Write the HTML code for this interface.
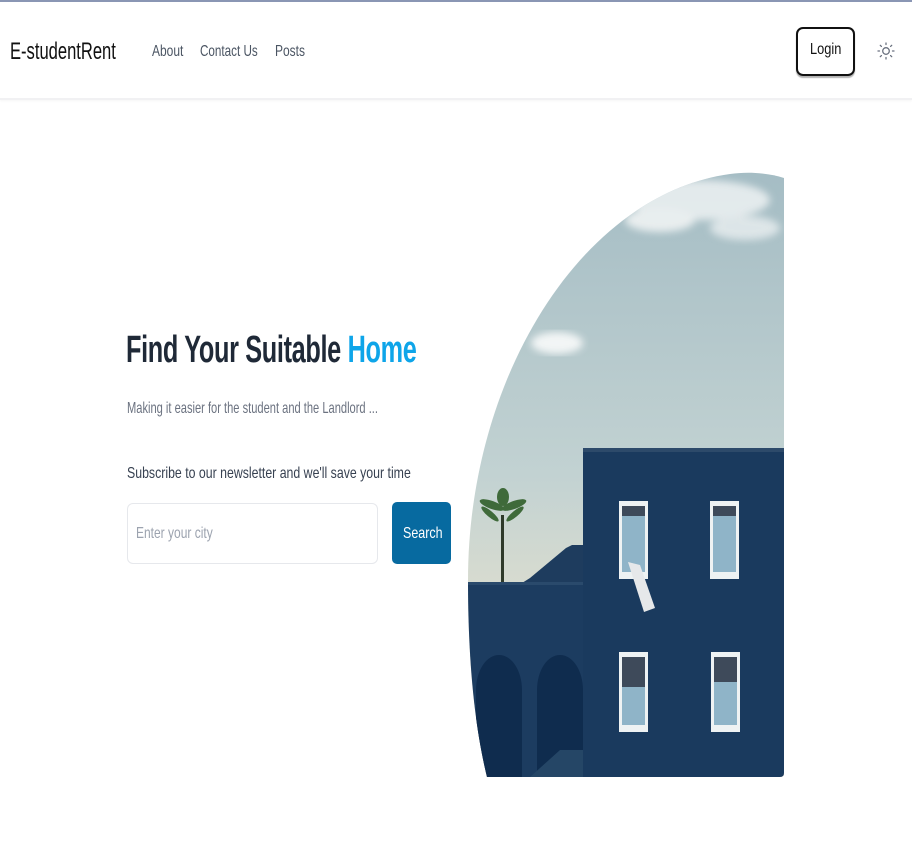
<!DOCTYPE html>
<html><head><meta charset="utf-8"><style>
*{margin:0;padding:0;box-sizing:border-box}
html,body{width:912px;height:854px;overflow:hidden;background:#fff;font-family:"Liberation Sans",sans-serif}
.topline{position:absolute;left:0;top:0;width:912px;height:2px;background:#8a96b4}
.hdr{position:absolute;left:0;top:2px;width:912px;height:98px;border-bottom:2px solid #f1f1f3;box-shadow:0 1px 2px rgba(0,0,0,.04)}
.t{position:absolute;white-space:nowrap;transform-origin:0 50%}
.login{position:absolute;left:796px;top:27px;width:59px;height:49px;border:2px solid #111;border-radius:7px;box-shadow:0 2px 1px rgba(0,0,0,.3)}
.inp{position:absolute;left:127px;top:503px;width:251px;height:61px;border:1px solid #e6e8ec;border-radius:6px}
.btn{position:absolute;left:392px;top:502px;width:59px;height:62px;background:#076aa0;border-radius:5px}
</style></head><body>
<div class="topline"></div>
<div class="hdr"></div>
<div class="t" style="left:10px;top:38px;font-size:24px;line-height:28px;color:#111;transform:scaleX(.69)">E-studentRent</div>
<div class="t" style="left:152px;top:42px;font-size:16px;line-height:20px;color:#4b5563;transform:scaleX(.75)">About</div>
<div class="t" style="left:200px;top:42px;font-size:16px;line-height:20px;color:#4b5563;transform:scaleX(.73)">Contact Us</div>
<div class="t" style="left:275px;top:42px;font-size:16px;line-height:20px;color:#4b5563;transform:scaleX(.75)">Posts</div>
<div class="login"></div>
<div class="t" style="left:810px;top:40px;font-size:16px;line-height:20px;color:#111;transform:scaleX(.8)">Login</div>
<svg style="position:absolute;left:876px;top:41px" width="20" height="20" viewBox="0 0 20 20" fill="none" stroke="#6b7280" stroke-width="1.3" stroke-linecap="round">
<circle cx="10" cy="10" r="3.3"/><path d="M10 2v1.5M10 16.5V18M2 10h1.5M16.5 10H18M4.3 4.3l1.1 1.1M14.6 14.6l1.1 1.1M4.3 15.7l1.1-1.1M14.6 5.4l1.1-1.1"/></svg>

<div class="t" style="left:126px;top:328px;font-size:38px;line-height:44px;font-weight:bold;color:#1f2937;transform:scaleX(.665);letter-spacing:-.5px">Find Your Suitable <span style="color:#0ea5e9">Home</span></div>
<div class="t" style="left:127px;top:399px;font-size:16px;line-height:20px;color:#6b7280;transform:scaleX(.695)">Making it easier for the student and the Landlord ...</div>
<div class="t" style="left:127px;top:464px;font-size:16px;line-height:20px;color:#374151;transform:scaleX(.77)">Subscribe to our newsletter and we'll save your time</div>
<div class="inp"></div>
<div class="t" style="left:136px;top:524px;font-size:16px;line-height:20px;color:#9ca3af;transform:scaleX(.75)">Enter your city</div>
<div class="btn"></div>
<div class="t" style="left:403px;top:524px;font-size:16px;line-height:20px;color:#fff;transform:scaleX(.78)">Search</div>

<svg style="position:absolute;left:0;top:0" width="912" height="854" viewBox="0 0 912 854">
<defs>
<clipPath id="c"><path d="M784 178 C765 172 745 172 730 174 C580 195 468 380 468 580 C468 680 478 740 487 777 L780 777 Q784 777 784 773 Z"/></clipPath>
<linearGradient id="sky" x1="0" y1="0" x2="0" y2="1">
<stop offset="0" stop-color="#a4bcc4"/><stop offset=".5" stop-color="#c2d2d2"/><stop offset=".75" stop-color="#e0dfcf"/><stop offset="1" stop-color="#f2dcb2"/></linearGradient>
<filter id="b"><feGaussianBlur stdDeviation="4"/></filter>
</defs>
<g clip-path="url(#c)">
<rect x="460" y="165" width="330" height="620" fill="url(#sky)"/>
<g filter="url(#b)" opacity=".85"><ellipse cx="700" cy="200" rx="70" ry="20" fill="#eef2f3"/>
<ellipse cx="660" cy="220" rx="35" ry="12" fill="#f4f6f6"/>
<ellipse cx="745" cy="228" rx="35" ry="12" fill="#e6ecee"/></g>
<ellipse cx="557" cy="343" rx="26" ry="11" fill="#f6f8f8" filter="url(#b)" opacity=".95"/>
<rect x="501" y="515" width="3" height="68" fill="#2f3a2a"/>
<g fill="#3f6a3a"><ellipse cx="492" cy="505" rx="13" ry="4" transform="rotate(20 492 505)"/><ellipse cx="514" cy="505" rx="13" ry="4" transform="rotate(-20 514 505)"/><ellipse cx="503" cy="497" rx="6" ry="9"/><ellipse cx="490" cy="514" rx="11" ry="3" transform="rotate(40 490 514)"/><ellipse cx="515" cy="514" rx="11" ry="3" transform="rotate(-40 515 514)"/></g>
<path d="M522 583 L530 578 L536 573 L542 568 L548 563 L554 558 L560 553 L566 548 L572 545 L584 545 L584 583Z" fill="#1e3c5e"/>
<rect x="460" y="582" width="125" height="200" fill="#1c3c60"/>
<rect x="460" y="582" width="125" height="3" fill="#2a4a6c"/>
<path d="M476 777 V690 A23 35 0 0 1 522 690 V777Z" fill="#0f2c4e"/>
<path d="M537 777 V690 A23 35 0 0 1 583 690 V777Z" fill="#0f2c4e"/>
<path d="M530 777 L560 750 L600 750 L640 777Z" fill="#254666"/>
<rect x="583" y="449" width="205" height="330" fill="#1a3a5e"/>
<rect x="583" y="448" width="205" height="4" fill="#2d4a6a"/>
<g fill="#eef2f3"><rect x="619" y="501" width="29" height="78"/><rect x="710" y="501" width="29" height="78"/><rect x="619" y="652" width="29" height="80"/><rect x="711" y="652" width="29" height="80"/></g>
<g fill="#8fb4c8"><rect x="622" y="515" width="23" height="57"/><rect x="713" y="515" width="23" height="57"/><rect x="622" y="665" width="23" height="60"/><rect x="714" y="665" width="23" height="60"/></g>
<g fill="#3e4a5a"><rect x="622" y="506" width="23" height="10"/><rect x="713" y="506" width="23" height="10"/><rect x="622" y="657" width="23" height="30"/><rect x="714" y="657" width="23" height="25"/></g>
<path d="M628 562 L640 565 L655 608 L644 612Z" fill="#e6e8ea"/>
</g>
</svg>
</body></html>
